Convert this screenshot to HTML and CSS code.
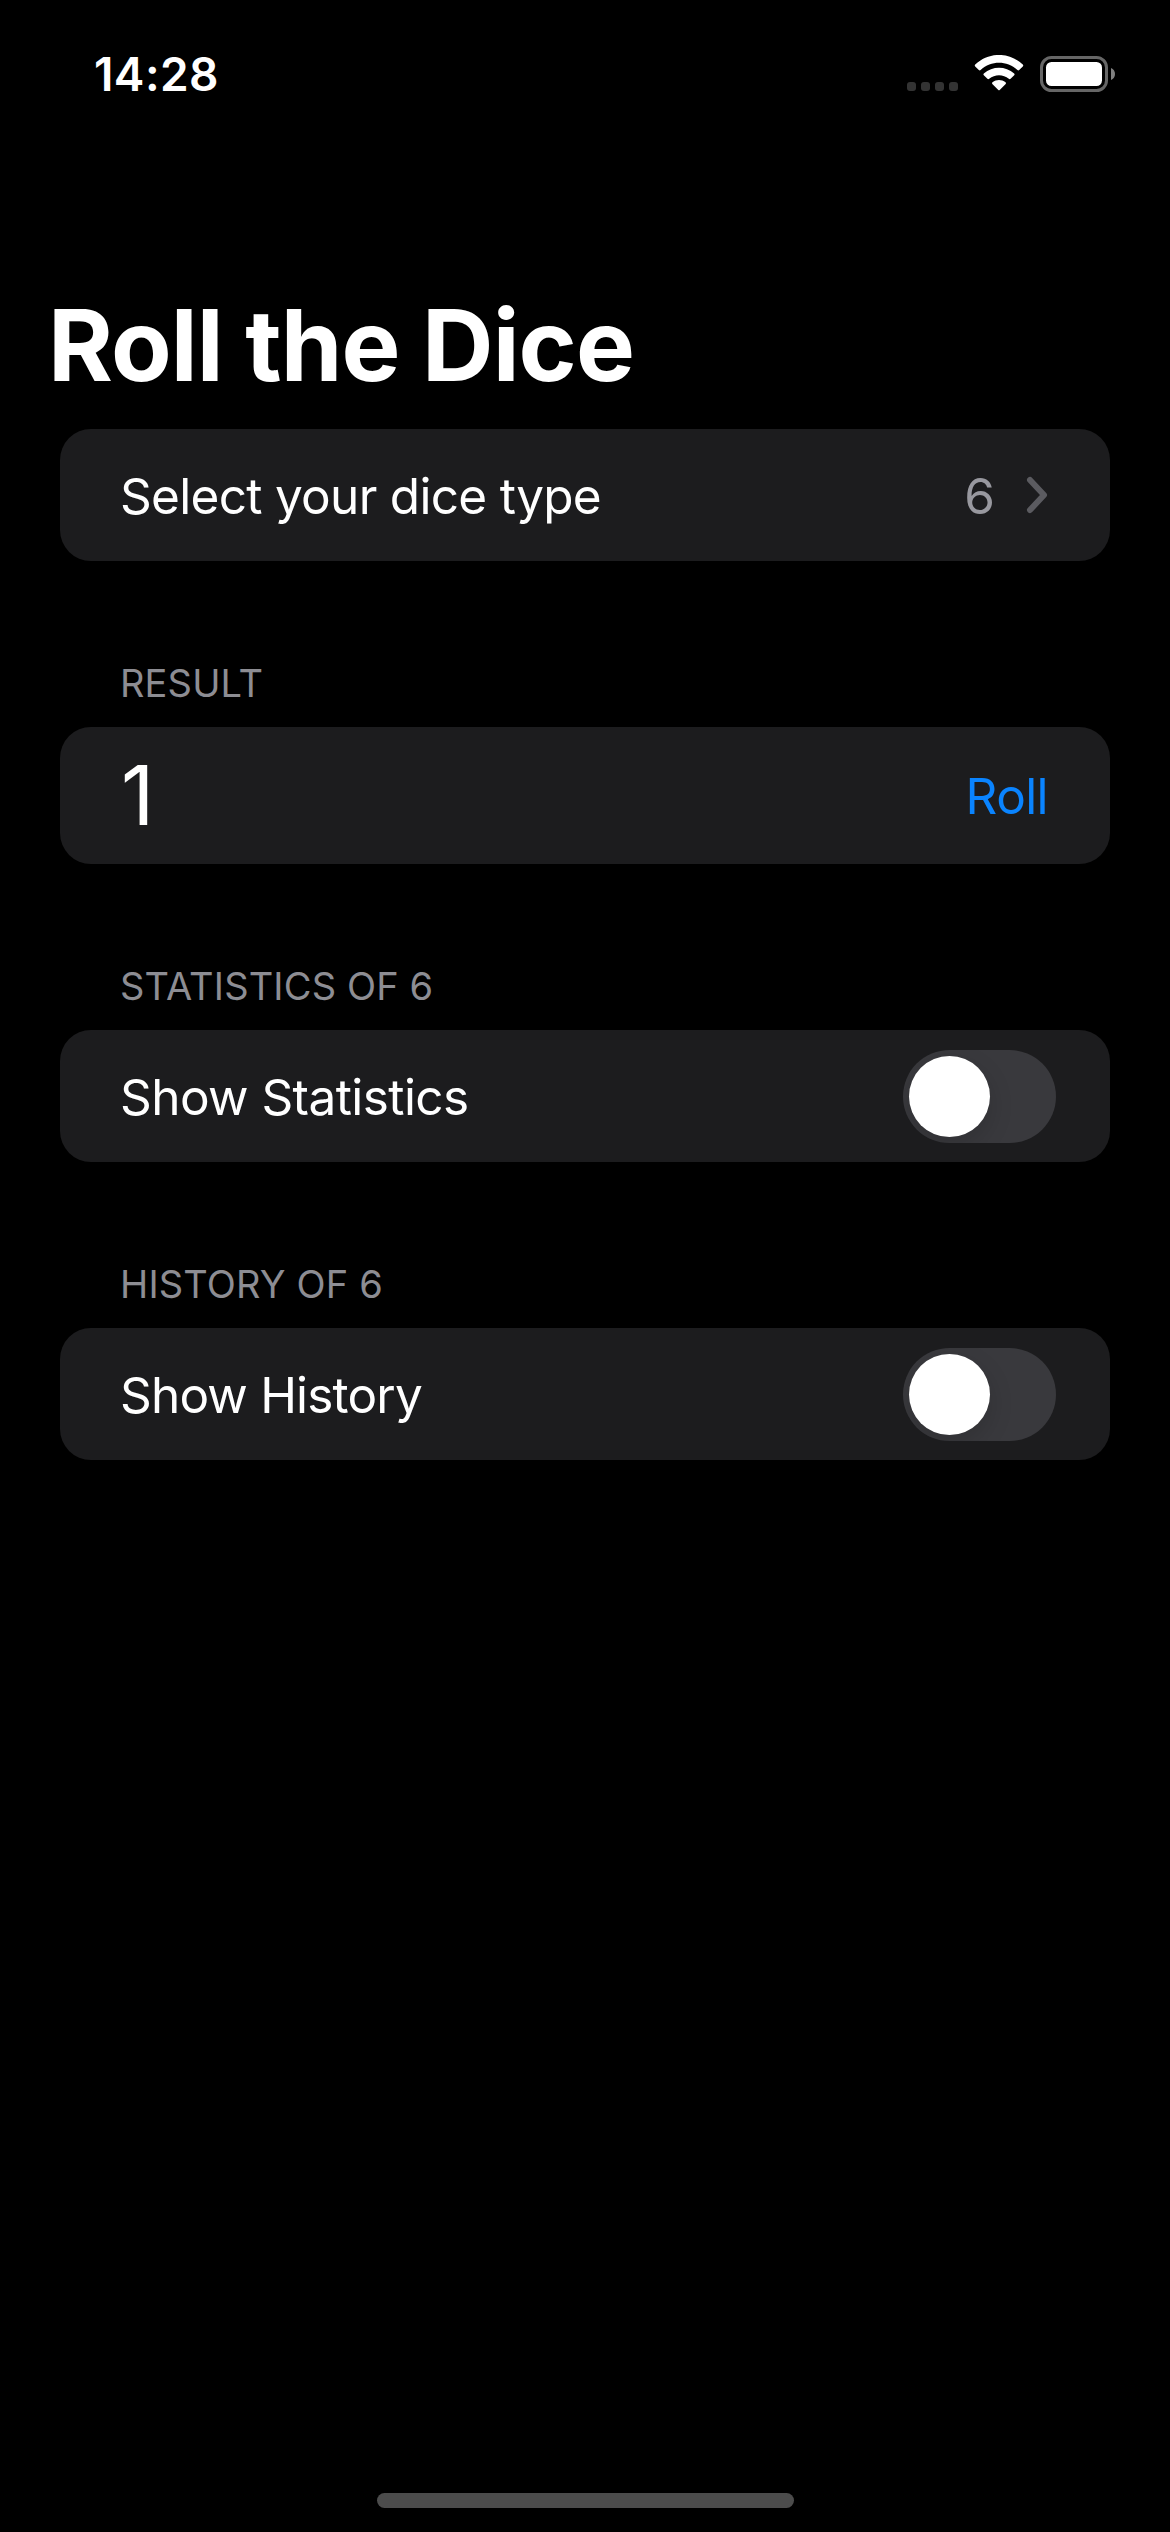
FILE: index.html
```html
<!DOCTYPE html>
<html lang="en">
<head>
<meta charset="utf-8">
<title>Roll the Dice</title>
<link rel="stylesheet" href="styles.css">
</head>
<body>
<div class="screen">
  <header class="status-bar">
    <time class="clock">14:28</time>
    <div class="indicators">
      <div class="cellular"><i></i><i></i><i></i><i></i></div>
      <svg class="wifi" width="50" height="38" viewBox="974 55 50 38" fill="#fff">
        <path d="M975.2 66.4Q974.3 65.5 975.2 64.6C988.8 51.7 1009.2 51.7 1022.8 64.6Q1023.7 65.5 1022.8 66.4L1019.2 70Q1018.3 70.8 1017.4 70C1006.9 60.3 991.1 60.3 980.6 70Q979.7 70.8 978.8 70Z"/>
        <path d="M983.8 75.2Q982.9 74.3 983.8 73.4C992.5 65.7 1005.5 65.7 1014.2 73.4Q1015.1 74.3 1014.2 75.2L1010.6 78.8Q1009.7 79.6 1008.8 78.8C1003.3 74.1 994.7 74.1 989.2 78.8Q988.3 79.6 987.4 78.8Z"/>
        <path d="M992.3 83.9Q991.5 83 992.5 82.2C996.3 79.4 1001.7 79.4 1005.5 82.2Q1006.5 83 1005.7 83.9L999.7 90Q999 90.7 998.3 90Z"/>
      </svg>
      <svg class="battery" width="76" height="38" viewBox="1040 55 76 38">
        <rect x="1041.5" y="57.5" width="65" height="33" rx="10" fill="none" stroke="#666" stroke-width="3"/>
        <rect x="1046" y="62" width="56" height="24" rx="5.5" fill="#fff"/>
        <path d="M1111 68C1113.5 69 1115 71.3 1115 74S1113.5 79 1111 80Z" fill="#808080"/>
      </svg>
    </div>
  </header>
  <h1 class="title">Roll the Dice</h1>
  <main class="form">
    <section class="card picker">
      <span class="label">Select your dice type</span>
      <span class="value">6</span>
      <svg class="chevron" width="22" height="38" viewBox="0 0 22 38"><path d="M4 4L18 19L4 34" fill="none" stroke="#5b5b60" stroke-width="6" stroke-linecap="round" stroke-linejoin="round"/></svg>
    </section>
    <h2 class="heading">RESULT</h2>
    <section class="card result">
      <span class="number">1</span>
      <button class="roll">Roll</button>
    </section>
    <h2 class="heading">STATISTICS OF 6</h2>
    <section class="card option">
      <span class="label statistics-label">Show Statistics</span>
      <span class="switch"><span class="knob"></span></span>
    </section>
    <h2 class="heading">HISTORY OF 6</h2>
    <section class="card option">
      <span class="label history-label">Show History</span>
      <span class="switch"><span class="knob"></span></span>
    </section>
  </main>
  <div class="home-indicator"></div>
</div>
</body>
</html>
```
FILE: styles.css
```css
* { box-sizing: border-box; }
body { margin: 0; background: #000; color: #fff; font-family: Inter, "Liberation Sans", sans-serif; }
.screen { display: flex; flex-direction: column; width: 1170px; height: 2532px; background: #000; overflow: hidden; }
.status-bar { display: flex; justify-content: space-between; align-items: center; height: 148px; padding: 0 54px 0 94px; }
.clock { font-size: 46px; font-weight: 600; line-height: 56px; letter-spacing: 0.4px; }
.indicators { display: flex; align-items: center; }
.cellular { display: flex; gap: 5px; padding-top: 25px; margin-right: 16px; }
.cellular i { width: 9px; height: 9px; border-radius: 3px; background: #333; }
.wifi { margin-right: 16px; }
.title { margin: 137px 0 0 48px; font-size: 99px; font-weight: 700; line-height: 120px; letter-spacing: -0.9px; white-space: nowrap; }
.form { padding: 24px 60px 0; }
.card { display: flex; align-items: center; height: 132px; padding: 0 60px; border-radius: 31px; background: #1c1c1e; }
.label, .value, .roll { padding: 2px 0 0; font-size: 49.5px; line-height: 60px; }
.label { flex: 1; letter-spacing: -0.7px; }
.statistics-label { letter-spacing: -0.57px; }
.history-label { letter-spacing: -0.82px; }
.value { color: #98989f; }
.chevron { margin: 0 2px 0 31px; }
.result { height: 137px; justify-content: space-between; }
.number { padding-left: 1px; font-size: 82px; line-height: 100px; }
.roll { margin: 0 2px 0 0; padding-top: 1px; border: 0; background: none; color: #0a84ff; font-family: inherit; letter-spacing: -0.6px; }
.heading { height: 166px; margin: 0; padding: 99px 60px 0; color: #8d8d93; font-size: 38px; font-weight: 400; line-height: 46px; letter-spacing: 0.15px; }
.option { padding-right: 54px; }
.switch { width: 153px; height: 93px; padding: 6px; border-radius: 47px; background: #39393d; overflow: hidden; }
.knob { display: block; width: 81px; height: 81px; border-radius: 50%; background: #fff; box-shadow: 0 9px 24px rgba(0, 0, 0, 0.15); }
.home-indicator { width: 417px; height: 15px; margin: auto 0 24px 377px; border-radius: 8px; background: #4c4c4c; }
```
